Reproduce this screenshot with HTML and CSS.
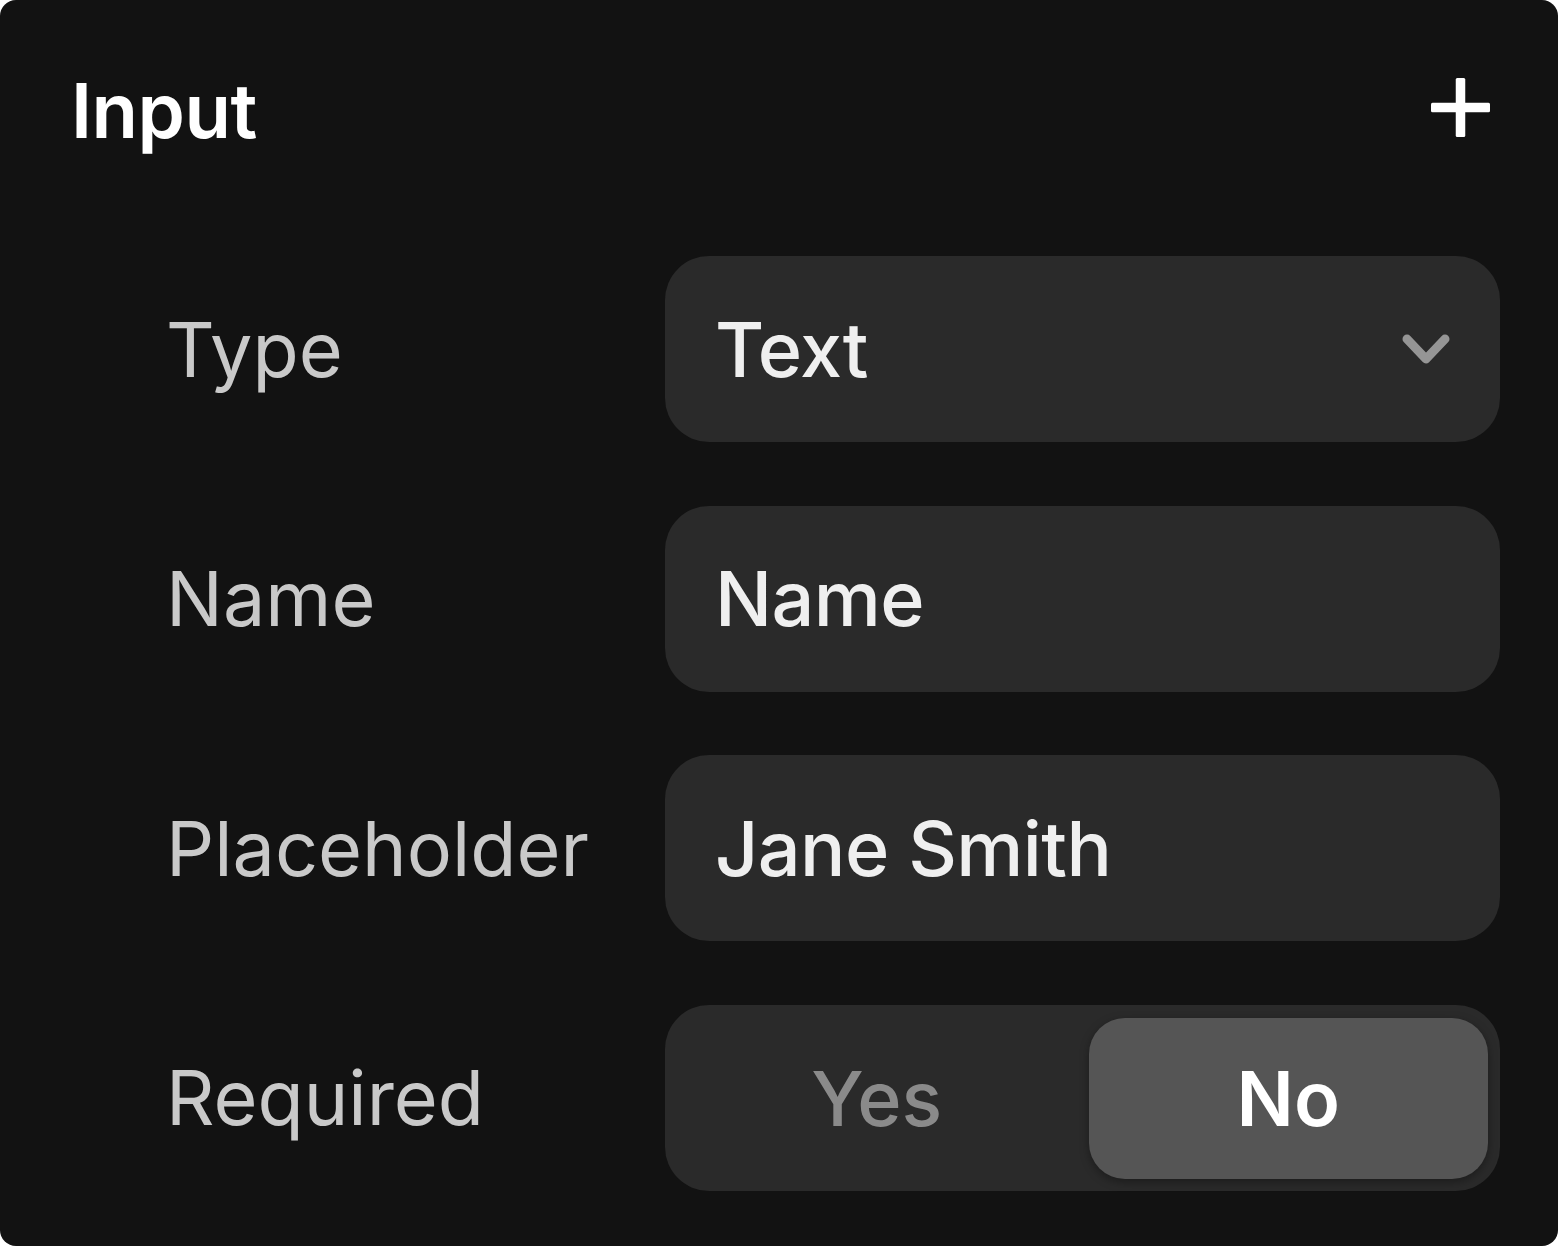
FILE: index.html
```html
<!DOCTYPE html>
<html lang="en">
<head>
<meta charset="utf-8">
<title>Input</title>
<link rel="stylesheet" href="styles.css">
</head>
<body>
<div class="card">
  <div class="header">
    <h1 class="title">Input</h1>
    <button class="add" aria-label="Add">
      <svg width="59" height="59" viewBox="0 0 59 59">
        <rect x="24.75" y="0" width="9.5" height="59" rx="1.5" fill="#ffffff"/>
        <rect x="0" y="24.75" width="59" height="9.5" rx="1.5" fill="#ffffff"/>
      </svg>
    </button>
  </div>
  <div class="form">
    <div class="row">
      <div class="label">Type</div>
      <div class="field select">
        <span class="value">Text</span>
        <svg class="chev" width="48" height="31" viewBox="0 0 48 31">
          <polyline points="5,5 24,25 43,5" fill="none" stroke="#959595" stroke-width="9" stroke-linecap="round" stroke-linejoin="round"/>
        </svg>
      </div>
    </div>
    <div class="row">
      <div class="label">Name</div>
      <div class="field"><span class="value">Name</span></div>
    </div>
    <div class="row">
      <div class="label">Placeholder</div>
      <div class="field"><span class="value">Jane Smith</span></div>
    </div>
    <div class="row">
      <div class="label">Required</div>
      <div class="toggle">
        <div class="seg">Yes</div>
        <div class="seg active">No</div>
      </div>
    </div>
  </div>
</div>
</body>
</html>
```

FILE: styles.css
```css
html, body {
  margin: 0;
  padding: 0;
  background: #ffffff;
}

body {
  font-family: Inter, "Noto Sans", "Liberation Sans", sans-serif;
}

.card {
  box-sizing: border-box;
  width: 1558px;
  height: 1246px;
  background: #121212;
  border-radius: 16px;
  padding: 64px 58px 56px 72px;
  display: flex;
  flex-direction: column;
}

.header {
  display: flex;
  align-items: center;
  justify-content: space-between;
  height: 92px;
  padding-right: 10px;
}

.title {
  margin: 0;
  font-size: 76px;
  line-height: 92px;
  font-weight: 600;
  color: #ffffff;
  letter-spacing: -0.5px;
  margin-left: -1px;
}

.add {
  background: none;
  border: 0;
  padding: 0;
  display: flex;
  margin-top: -6px;
}

.form {
  margin-top: 100px;
  padding-left: 94px;
  display: flex;
  flex-direction: column;
  gap: 63.5px;
}

.row {
  display: grid;
  grid-template-columns: 499px 1fr;
  align-items: center;
  height: 186px;
}

.label {
  font-size: 75.5px;
  color: #c9c9c9;
  font-weight: 400;
  white-space: nowrap;
}

.field {
  height: 186px;
  box-sizing: border-box;
  background: #2a2a2a;
  border-radius: 44px;
  padding: 0 50px 0 50px;
  display: flex;
  align-items: center;
  justify-content: space-between;
}

.value {
  font-size: 75.5px;
  font-weight: 500;
  color: #efefef;
  letter-spacing: -0.6px;
}

.chev {
  margin-top: 0;
}

.toggle {
  height: 186px;
  box-sizing: border-box;
  background: #2a2a2a;
  border-radius: 44px;
  padding: 13px 12px 12px 12px;
  display: flex;
  gap: 12px;
}

.seg {
  flex: 1;
  display: flex;
  align-items: center;
  justify-content: center;
  font-size: 75.5px;
  font-weight: 500;
  color: #8a8a8a;
  border-radius: 36px;
}

.seg.active {
  background: #555555;
  color: #ffffff;
  font-weight: 600;
  box-shadow: 0 3px 10px rgba(0, 0, 0, 0.35);
}
```
